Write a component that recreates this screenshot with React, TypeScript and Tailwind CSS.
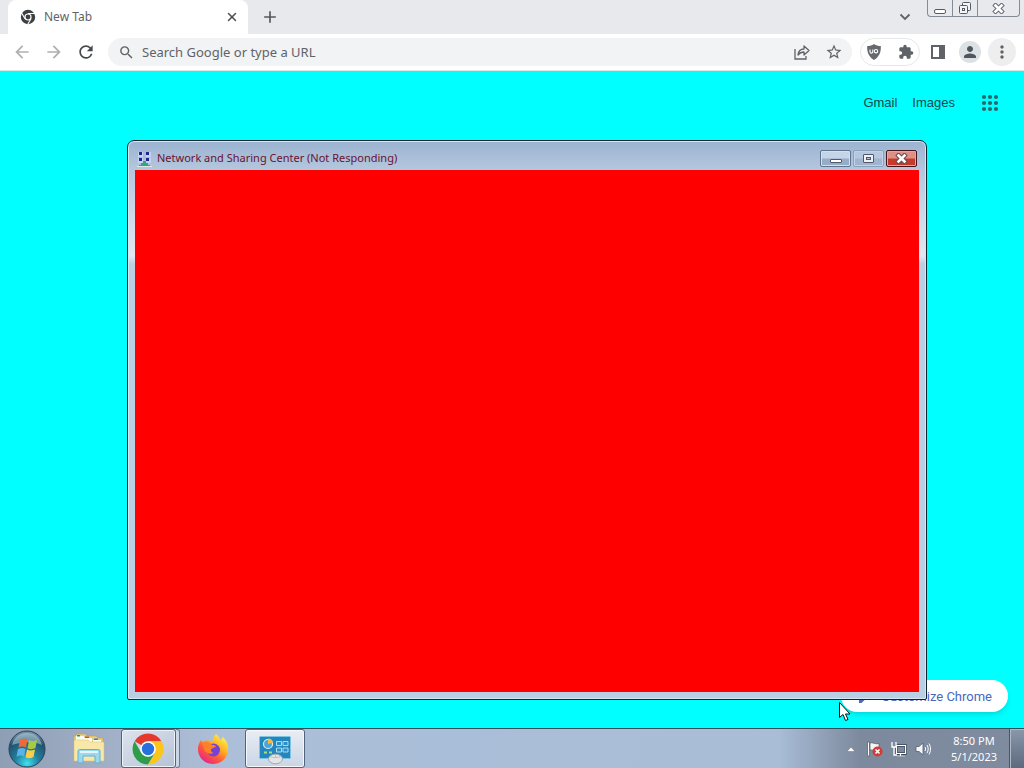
import type { ReactNode } from 'react';
import { FiX } from 'react-icons/fi';
import {
  MdAdd,
  MdArrowBack,
  MdArrowForward,
  MdEdit,
  MdExtension,
  MdMoreVert,
  MdPerson,
  MdRefresh,
  MdSearch,
  MdStarBorder,
} from 'react-icons/md';

const appDots = [3, 9, 15];

function ToolbarButton({ label, children }: { label: string; children: ReactNode }) {
  return (
    <button aria-label={label} className="flex h-8 w-8 shrink-0 items-center justify-center text-[#5f6368]">
      {children}
    </button>
  );
}

function ChromeMono() {
  return (
    <svg width="16" height="16" viewBox="0 0 16 16">
      <circle cx="8" cy="8" r="7.2" fill="#3c4043" />
      <circle cx="8" cy="8" r="3.6" fill="#fff" />
      <circle cx="8" cy="8" r="2.4" fill="#3c4043" />
      <path d="M8 4.5h7M5 9.8 1.5 3.8M11 9.8 7.6 15.5" stroke="#fff" strokeWidth="1.1" />
    </svg>
  );
}

function ShareIcon() {
  return (
    <svg width="18" height="18" viewBox="0 0 18 18" fill="none" stroke="#5f6368" strokeWidth="1.3">
      <path d="M2 6v10h11v-3" />
      <path d="M5 12c.4-4 2.800-6 6-6V3l5 4.500-5 4.500V9C8.500 9 6.500 10 5 12z" strokeLinejoin="round" />
    </svg>
  );
}

function ShieldIcon() {
  return (
    <svg width="16" height="18" viewBox="0 0 16 18">
      <path d="M8 1c2 1.500 4 2 6.800 2 .3 6-1.300 10.500-6.800 14C2.500 13.500.9 9 1.200 3 4 3 6 2.500 8 1z" fill="#666a6e" />
      <path d="M4 6.500v2.200a1.400 1.400 0 0 0 2.800 0V6.500" fill="none" stroke="#fff" strokeWidth="1.1" />
      <circle cx="10" cy="8.200" r="1.700" fill="none" stroke="#fff" strokeWidth="1.1" />
    </svg>
  );
}

function CloseGlyph({ outline }: { outline: string }) {
  return (
    <svg width="13" height="11" viewBox="0 0 13 11" fill="none">
      <path d="m3.500 2.500 6 6m0-6-6 6" stroke={outline} strokeWidth="4.600" strokeLinecap="square" />
      <path d="m3.500 2.500 6 6m0-6-6 6" stroke="#fff" strokeWidth="2.600" strokeLinecap="square" />
    </svg>
  );
}

function TabStrip() {
  return (
    <div className="flex h-[34px] justify-between bg-[#e7e9ec]">
      <div className="flex pl-2">
        <div className="flex w-60 items-center rounded-t-lg bg-white pr-2 pl-3">
          <ChromeMono />
          <span className="ml-2 flex-1 text-[12px] text-[#5f6368]">New Tab</span>
          <button aria-label="Close tab" className="flex h-4 w-4 items-center justify-center text-[#4a4d51]">
            <FiX size={14} strokeWidth={2.5} />
          </button>
        </div>
        <button aria-label="New tab" className="ml-3 flex w-5 items-center justify-center text-[#55585c]">
          <MdAdd size={20} />
        </button>
      </div>
      <div className="flex items-start pr-1">
        <button aria-label="Search tabs" className="mr-3 flex h-[34px] w-5 items-center justify-center">
          <svg width="12" height="8" viewBox="0 0 12 8" fill="none" stroke="#5f6368" strokeWidth="1.8">
            <path d="m1.500 1.500 4.500 4.500 4.500-4.500" />
          </svg>
        </button>
        <div className="flex h-[17px] w-[93px] overflow-hidden rounded-b-[4px] border border-t-0 border-[#858b95] text-[#555b66]">
          <button aria-label="Minimize" className="flex w-[25px] items-center justify-center border-r border-[#858b95]">
            <svg width="12" height="14" viewBox="0 0 12 14">
              <rect x=".5" y="8.500" width="11" height="4" rx="1.500" fill="#fff" stroke="currentColor" />
            </svg>
          </button>
          <button aria-label="Restore" className="flex w-[25px] items-center justify-center border-r border-[#858b95]">
            <svg width="14" height="14" viewBox="0 0 14 14" fill="#f4f5f7" stroke="currentColor">
              <rect x="4.500" y="1.500" width="8" height="8" rx="1" />
              <rect x="1.500" y="4.500" width="8" height="8" rx="1" />
              <rect x="4.500" y="7.500" width="2" height="2" />
            </svg>
          </button>
          <button aria-label="Close" className="flex flex-1 items-center justify-center">
            <CloseGlyph outline="#666c76" />
          </button>
        </div>
      </div>
    </div>
  );
}

function Toolbar() {
  return (
    <div className="flex h-[37px] items-center border-b border-[#dfe6e8] bg-white px-[6px]">
      <div className="flex opacity-50">
        <ToolbarButton label="Back">
          <MdArrowBack size={20} />
        </ToolbarButton>
        <ToolbarButton label="Forward">
          <MdArrowForward size={20} />
        </ToolbarButton>
      </div>
      <ToolbarButton label="Reload">
        <MdRefresh size={20} className="text-[#45484c]" />
      </ToolbarButton>
      <div className="mr-2 ml-[6px] flex h-7 flex-1 items-center rounded-full bg-[#f1f3f4]">
        <span className="flex w-[34px] justify-center pl-[2px] text-[#5f6368]">
          <MdSearch size={17} />
        </span>
        <input
          aria-label="Address and search bar"
          placeholder="Search Google or type a URL"
          className="h-7 min-w-0 flex-1 bg-transparent text-[13px] text-[#3c4043] outline-none placeholder:text-[#5f6368]"
        />
        <ToolbarButton label="Share this page">
          <ShareIcon />
        </ToolbarButton>
        <ToolbarButton label="Bookmark this tab">
          <MdStarBorder size={18} />
        </ToolbarButton>
        <span className="w-[2px]" />
      </div>
      <div className="mr-[2px] flex h-7 items-center gap-4 rounded-full border border-[#e6e8ea] px-[5px] text-[#5f6368]">
        <button aria-label="uBlock Origin">
          <ShieldIcon />
        </button>
        <button aria-label="Extensions">
          <MdExtension size={16} />
        </button>
      </div>
      <ToolbarButton label="Side panel">
        <svg width="14" height="14" viewBox="0 0 14 14">
          <rect x="1" y="1" width="12" height="12" fill="#fff" stroke="#5f6368" strokeWidth="2" />
          <path d="M8 1h5v12H8z" fill="#5f6368" />
        </svg>
      </ToolbarButton>
      <ToolbarButton label="Profile">
        <span className="flex h-[22px] w-[22px] items-center justify-center rounded-full bg-[#dbe1e5]">
          <MdPerson size={18} className="text-[#50565c]" />
        </span>
      </ToolbarButton>
      <ToolbarButton label="Menu">
        <span className="flex h-7 w-7 items-center justify-center rounded-full bg-[#eeeeef]">
          <MdMoreVert size={20} />
        </span>
      </ToolbarButton>
    </div>
  );
}

function NewTabPage() {
  return (
    <main className="flex flex-1 flex-col justify-between bg-[#00ffff] font-['Liberation_Sans',sans-serif] text-[13px]">
      <nav className="flex h-16 items-center justify-end pr-[25px] text-[#17494c]">
        <a href="#gmail">Gmail</a>
        <a href="#images" className="ml-[15px]">
          Images
        </a>
        <button aria-label="Google apps" className="ml-[26px]">
          <svg width="18" height="18" viewBox="0 0 18 18" fill="#2a686c">
            {appDots.map((y) => appDots.map((x) => <circle key={`${x}-${y}`} cx={x} cy={y} r="2.1" />))}
          </svg>
        </button>
      </nav>
      <button className="mr-4 mb-4 flex h-8 items-center gap-2 self-end rounded-full bg-white pt-[1px] pr-4 pl-4 font-['Roboto',sans-serif] text-[#4a68bd] shadow-md">
        <MdEdit size={16} />
        Customize Chrome
      </button>
    </main>
  );
}

function NotRespondingWindow() {
  return (
    <section className="absolute top-[140px] right-[97px] bottom-[68px] left-[127px] flex flex-col rounded-t-[7px] rounded-b-[2px] border border-[#10242e] bg-[linear-gradient(#9bb3d1_0px,#b4c7de_29px,#c5d3e6_60px,#e2e7f1_115px,#bacfe4_123px,#b9cfe4_100%)] px-[7px] pb-[7px] shadow-[inset_0_0_0_1px_#d6e6f3]">
      <header className="flex h-[29px] items-start justify-between">
        <div className="flex h-[29px] items-center pt-[6px] pl-[2px]">
          <svg width="15" height="16" viewBox="0 0 15 16">
            <path d="M1 1h5v5H1zM9 1h5v5H9zM1 7h5v5H1zM9 7h5v5H9z" fill="#c3d6f0" />
            <path d="M2 1h3v3H2zM9 1h3v3H9zM2 7h3v3H2zM9 7h3v3H9z" fill="#23239a" />
            <path d="M6 10h3v2h2v2h2v1H2v-1h2v-2h2z" fill="#30a878" />
            <path d="M0 15.500h15" stroke="#dfe8e8" />
          </svg>
          <h1 className="ml-[5px] text-[11px] text-[#6a1230]">Network and Sharing Center (Not Responding)</h1>
        </div>
        <div className="mt-[9px] mr-[2px] flex gap-[2px]">
          <button
            aria-label="Minimize window"
            className="flex h-[17px] w-[31px] items-end justify-center rounded-[2px] border border-[#60748d] bg-linear-to-b from-[#c5d5e8] from-45% to-[#96adc8] to-55% pb-[2px] shadow-[inset_0_0_0_1px_#d3e0ee]"
          >
            <svg width="12" height="6" viewBox="0 0 12 6">
              <rect x=".5" y="1.500" width="11" height="3" rx=".5" fill="#fff" stroke="#50596a" />
            </svg>
          </button>
          <button
            aria-label="Maximize window"
            className="flex h-[17px] w-[31px] items-center justify-center rounded-[2px] border border-[#8ba0bb] bg-linear-to-b from-[#b5c8df] from-45% to-[#9fb5d0] to-55% shadow-[inset_0_0_0_1px_#c3d2e5]"
          >
            <svg width="11" height="9" viewBox="0 0 11 9">
              <rect x=".5" y=".5" width="10" height="8" rx=".5" fill="#eef2f8" stroke="#50596a" />
              <rect x="3.500" y="3.500" width="4" height="2" fill="#b5c8df" stroke="#50596a" />
            </svg>
          </button>
          <button
            aria-label="Close window"
            className="flex h-[17px] w-[31px] items-center justify-center rounded-[2px] border border-[#45151c] bg-linear-to-b from-[#e08f86] from-45% to-[#c53a2b] to-55% shadow-[inset_0_0_0_1px_#e9a79c]"
          >
            <CloseGlyph outline="#6b4a50" />
          </button>
        </div>
      </header>
      <div className="flex-1 bg-[#ff0000]" />
    </section>
  );
}

function StartOrb() {
  return (
    <svg width="38" height="38" viewBox="0 0 38 38">
      <defs>
        <radialGradient id="orb" cx=".5" cy=".9" r=".85">
          <stop offset="0" stopColor="#3fe0f0" />
          <stop offset=".4" stopColor="#217f9d" />
          <stop offset=".8" stopColor="#23506e" />
          <stop offset="1" stopColor="#6f91a8" />
        </radialGradient>
      </defs>
      <circle cx="19" cy="19" r="18" fill="url(#orb)" stroke="#2b4257" />
      <path d="M4 15C6 7 12 3 19 3s13 4 15 12c-9-4-20-3-30 0z" fill="#c7dce5" opacity=".5" />
      <path d="M12 10c3-2 5-2 7.500-.5L18 17.500c-2.500-1.500-5-1.300-7.500 0z" fill="#ec6a37" />
      <path d="M21 10c3 1.500 5 1.300 8-.2L27.500 18c-3 1.500-5 1.500-8 .2z" fill="#a4ca46" />
      <path d="M10 19c3-1.500 5-1.500 7.500 0L16 26.500c-2.500-1.500-5-1.300-7.500.2z" fill="#5ab2e7" />
      <path d="M19 19.500c3 1.500 5 1.300 8-.1L25.500 27c-3 1.600-5 1.600-8 .2z" fill="#fcce43" />
    </svg>
  );
}

function ExplorerIcon() {
  return (
    <svg width="34" height="32" viewBox="0 0 34 32">
      <path d="M2 4l3-3h8l2 2h9l2 2h5v22H2z" fill="#e8ce78" stroke="#bda25a" strokeWidth=".6" />
      <path d="M4 3h8v4H4zM12 5h8v4h-8zM21 7h8v3h-8z" fill="#fbfbf2" />
      <path d="M5 2h3v1.500H5z" fill="#2a9b46" />
      <path d="M13 3.500h4V5h-4z" fill="#d14a33" />
      <path d="M22 5.500h4V7h-4z" fill="#3980cb" />
      <path d="M2 7h14l2 2h14v19H2z" fill="#f7e8a8" stroke="#d9bf72" strokeWidth=".5" />
      <path d="M6 30V18q0-1.500 1.500-1.500h19Q28 16.500 28 18v12h-5v-7H11v7z" fill="#9bd7ef" stroke="#62b0d7" />
      <path d="M8 19h18" stroke="#e1f6fd" strokeWidth="2" />
    </svg>
  );
}

function ChromeIcon() {
  return (
    <svg width="32" height="32" viewBox="0 0 32 32">
      <path d="M16 16 2.600 8.200A15.500 15.500 0 0 1 29.400 8.200H16z" fill="#e5392e" />
      <path d="M16 8.200h13.400A15.500 15.500 0 0 1 15.900 31.500L22.800 19.900z" fill="#fbc51c" />
      <path d="M2.600 8.200 9.300 19.900 16 23.800l6.800-3.900-6.900 11.600A15.500 15.500 0 0 1 2.600 8.200z" fill="#2f9c4c" />
      <circle cx="16" cy="16" r="7.800" fill="#fff" />
      <circle cx="16" cy="16" r="6.200" fill="#2870dc" />
    </svg>
  );
}

function FirefoxIcon() {
  return (
    <svg width="32" height="32" viewBox="0 0 32 32">
      <defs>
        <linearGradient id="fox" x1=".85" y1=".1" x2=".2" y2=".95">
          <stop offset="0" stopColor="#fff04a" />
          <stop offset=".35" stopColor="#ffae20" />
          <stop offset=".65" stopColor="#ff593b" />
          <stop offset="1" stopColor="#e3258b" />
        </linearGradient>
      </defs>
      <path
        d="M19 1c2 1.500 3.500 3.600 4.300 5.800C25 7 25.500 5 25.300 3.500 29.500 7 31.500 12 31 17.500 30.200 25.500 24 31 16 31S1.500 25 1 17c-.2-4 1-7.500 3.500-10.500 0 1.500.4 2.500 1 3C7 8 8.500 7.500 10.500 7.500c2 0 4 .5 5 1.500C15.500 5.500 17 3 19 1z"
        fill="url(#fox)"
      />
      <circle cx="16.500" cy="17" r="6.500" fill="#7542d5" />
      <path d="M5.500 9.500c4-2 8 .3 9.500 2.500 2 0 4 .5 4 1.500-1 1.500-4 1-5 3-.5 2 1 3 2.500 3.500-3 1.500-7 .5-9-2.500-1-3-1-5-2-8z" fill="#ff8127" />
    </svg>
  );
}

function ControlPanelIcon() {
  return (
    <svg width="34" height="32" viewBox="0 0 34 32">
      <rect x="1.500" y="3.500" width="31" height="22" rx="1" fill="#2486be" stroke="#7cc5e4" />
      <circle cx="10" cy="11" r="4.500" fill="#4ca6d5" stroke="#d9f0fa" strokeWidth="1.200" />
      <path d="M10 11V5.500a5.500 5.500 0 0 1 5.200 4z" fill="#f8b941" />
      <path d="M6 19.500h3M11 19.500h3" stroke="#a8de83" strokeWidth="2" />
      <path d="M18.500 8.500h5v4h-5zM25 8.500h5v4h-5zM18.500 15h5v4h-5zM25 15h5v4h-5z" fill="#2f8fc4" stroke="#a9dcf0" />
      <ellipse cx="17.500" cy="26" rx="7" ry="4.800" fill="#e3e5e7" stroke="#a2a8ad" />
      <path d="M12 23.500c3 1.500 7 1.500 11 0M17.500 21.500v3" fill="none" stroke="#b9bec2" />
    </svg>
  );
}

function Tray() {
  return (
    <div className="flex items-center text-white">
      <button aria-label="Show hidden icons" className="mr-[10px]">
        <svg width="10" height="6" viewBox="0 0 10 6">
          <path d="M1 5.500 5 1l4 4.500z" fill="#fff" stroke="#606e80" strokeWidth=".5" />
        </svg>
      </button>
      <button aria-label="Action Center" className="mr-[7px]">
        <svg width="18" height="18" viewBox="0 0 18 18">
          <path d="M1.500 2h2v14h-2z" fill="#fff" stroke="#4e5866" strokeWidth=".7" />
          <path d="M4 3c3-1 4 1.500 9 .5v7c-4 1-6-1-9-.5z" fill="#f5f6f8" stroke="#4e5866" strokeWidth=".7" />
          <circle cx="11.500" cy="11.500" r="5" fill="#d43b35" />
          <path d="m9.500 9.500 4 4m0-4-4 4" stroke="#fff" strokeWidth="1.600" />
        </svg>
      </button>
      <button aria-label="Network" className="mr-2">
        <svg width="16" height="16" viewBox="0 0 16 16" fill="none">
          <path d="M5.500 4.500h9v8h-9zM9.500 12.500v2.500M6 15h8" stroke="#3a4656" strokeWidth="2.600" />
          <path d="M5.500 4.500h9v8h-9zM9.500 12.500v2.500M6 15h8" stroke="#fff" strokeWidth="1.200" />
          <path d="M1 1v5h4V1M3 6v8h3" stroke="#fff" strokeWidth="1.300" />
        </svg>
      </button>
      <button aria-label="Volume" className="mr-[18px]">
        <svg width="16" height="16" viewBox="0 0 16 16" fill="none" stroke="#fff">
          <path d="M1 5.500h3L8 2v12l-4-3.500H1z" fill="#f4f6f8" stroke="#526073" strokeWidth=".8" />
          <path d="M10 6c.8 1.300.8 2.700 0 4M12 4c1.600 2.500 1.600 5.500 0 8M14 2.500c2 3.500 2 7.500 0 11" />
        </svg>
      </button>
      <time className="w-[50px] text-center text-[11px] leading-4 whitespace-nowrap">
        8:50 PM
        <br />
        5/1/2023
      </time>
      <button
        aria-label="Show desktop"
        className="ml-[10px] h-10 w-[15px] border-l border-[#48566a] bg-linear-to-b from-[#8a98ab] to-[#5b687d] shadow-[inset_1px_1px_0_#aeb9c8]"
      />
    </div>
  );
}

function Taskbar() {
  return (
    <footer className="flex h-10 shrink-0 justify-between border-t border-[#30505f] bg-[linear-gradient(90deg,#8e9eb5_0%,#a3b2c8_12%,#adbfd8_22%,#a9bed8_45%,#a9bdd7_76%,#7d899d_84%,#7f8b9e_100%)]">
      <div className="flex">
        <button aria-label="Start" className="ml-2 flex w-[38px] items-center">
          <StartOrb />
        </button>
        <button aria-label="Windows Explorer" className="ml-3 flex w-[62px] items-center justify-center">
          <ExplorerIcon />
        </button>
        <div className="ml-[1px] flex">
          <button
            aria-label="Google Chrome"
            className="flex w-[55px] items-center justify-center rounded-[3px] border border-[#52647c] bg-linear-to-br from-[#dde4ee] to-[#b5c2d6] pr-[2px] shadow-[inset_0_0_0_1px_#edf2f8]"
          >
            <ChromeIcon />
          </button>
          <span className="w-1 rounded-r-[3px] border-y border-r border-[#697b94] bg-[#cbd6e5]" />
        </div>
        <button aria-label="Firefox" className="ml-[2px] flex w-[61px] items-center justify-center">
          <FirefoxIcon />
        </button>
        <button
          aria-label="Network and Sharing Center"
          className="ml-[2px] flex w-[60px] items-center justify-center rounded-[3px] border border-[#52647c] bg-linear-to-b from-[#e9edf4] to-[#cad5e5] shadow-[inset_0_0_0_1px_#f5f8fb]"
        >
          <ControlPanelIcon />
        </button>
      </div>
      <Tray />
    </footer>
  );
}

export default function App() {
  return (
    <div className="relative flex h-screen flex-col overflow-hidden font-['Noto_Sans',sans-serif]">
      <TabStrip />
      <Toolbar />
      <NewTabPage />
      <Taskbar />
      <NotRespondingWindow />
      {/* Mouse pointer */}
      <svg className="absolute top-[701px] left-[838px]" width="13" height="21" viewBox="0 0 13 21">
        <path d="M1.500 1.500v15l3.500-3 2.500 6 2.500-1-2.500-5.500h4.500z" fill="#fff" stroke="#111" />
      </svg>
    </div>
  );
}
